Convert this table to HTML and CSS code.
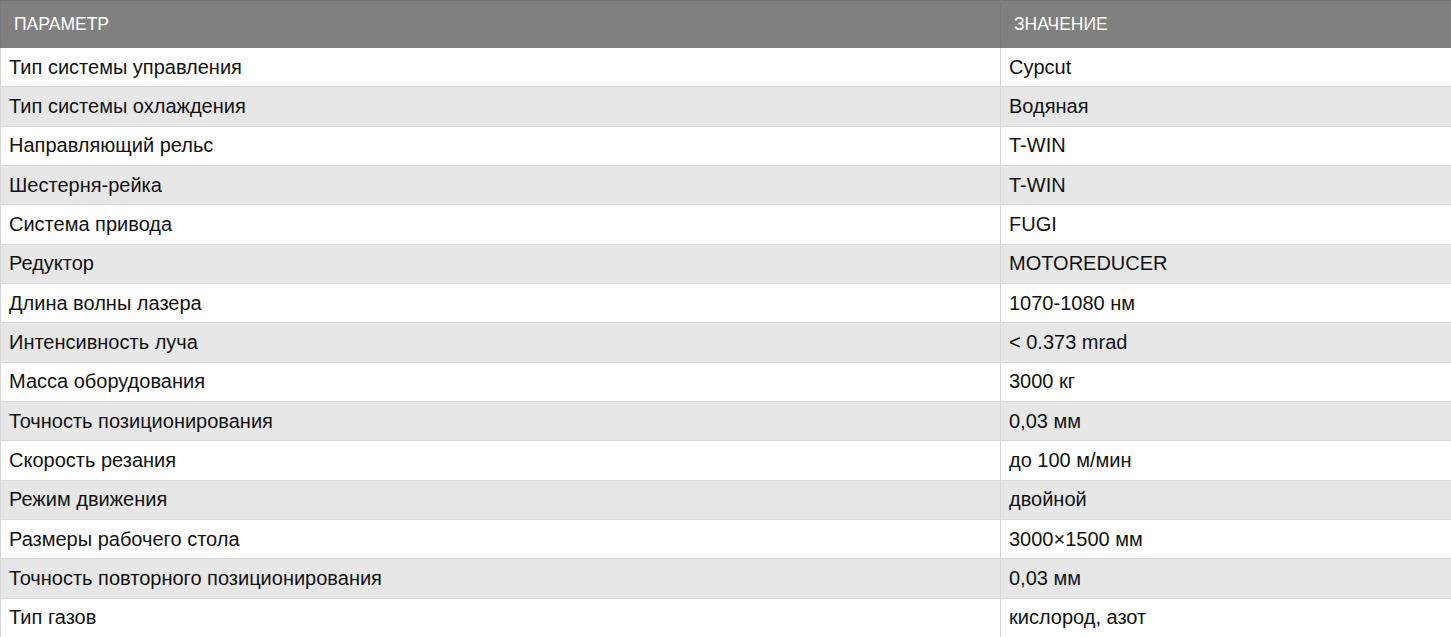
FILE: index.html
```html
<!DOCTYPE html>
<html lang="ru">
<head>
<meta charset="utf-8">
<title>Характеристики</title>
<link rel="stylesheet" href="styles.css">
</head>
<body>
<table class="spec">
  <colgroup><col class="c-param"><col class="c-value"></colgroup>
  <thead>
    <tr><th>Параметр</th><th>Значение</th></tr>
  </thead>
  <tbody>
    <tr><td>Тип системы управления</td><td>Cypcut</td></tr>
    <tr><td>Тип системы охлаждения</td><td>Водяная</td></tr>
    <tr><td>Направляющий рельс</td><td>T-WIN</td></tr>
    <tr><td>Шестерня-рейка</td><td>T-WIN</td></tr>
    <tr><td>Система привода</td><td>FUGI</td></tr>
    <tr><td>Редуктор</td><td>MOTOREDUCER</td></tr>
    <tr><td>Длина волны лазера</td><td>1070-1080 нм</td></tr>
    <tr><td>Интенсивность луча</td><td>&lt; 0.373 mrad</td></tr>
    <tr><td>Масса оборудования</td><td>3000 кг</td></tr>
    <tr><td>Точность позиционирования</td><td>0,03 мм</td></tr>
    <tr><td>Скорость резания</td><td>до 100 м/мин</td></tr>
    <tr><td>Режим движения</td><td>двойной</td></tr>
    <tr><td>Размеры рабочего стола</td><td>3000×1500 мм</td></tr>
    <tr><td>Точность повторного позиционирования</td><td>0,03 мм</td></tr>
    <tr><td>Тип газов</td><td>кислород, азот</td></tr>
  </tbody>
</table>
</body>
</html>
```

FILE: styles.css
```css
html, body {
  margin: 0;
  padding: 0;
  background: #ffffff;
}

body {
  font-family: "Liberation Sans", Arial, sans-serif;
  color: #111111;
}

.spec {
  width: 1451px;
  border-collapse: collapse;
  table-layout: fixed;
}

.c-param { width: 1000px; }
.c-value { width: 451px; }

.spec th {
  background: #808080;
  color: #ffffff;
  font-size: 17.5px;
  font-weight: normal;
  text-transform: uppercase;
  text-align: left;
  height: 47px;
  padding: 0 13px;
  box-sizing: border-box;
  border: 1px solid #7a7a7a;
  border-top-color: #707070;
  border-bottom-color: #808080;
  vertical-align: middle;
}

.spec td {
  font-size: 20px;
  line-height: 23px;
  height: 39.33px;
  padding: 0 8px;
  box-sizing: border-box;
  border: 1px solid #d8d8d8;
  vertical-align: middle;
}

.spec tbody tr:nth-child(even) td {
  background: #e7e7e7;
}
```
